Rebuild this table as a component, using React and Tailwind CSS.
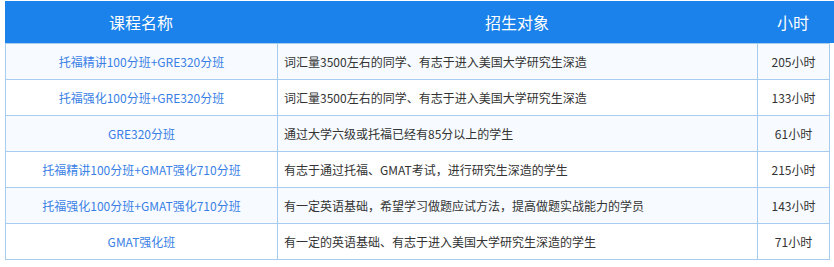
const ROWS = [
  { name: "托福精讲100分班+GRE320分班", target: "词汇量3500左右的同学、有志于进入美国大学研究生深造", hours: "205小时" },
  { name: "托福强化100分班+GRE320分班", target: "词汇量3500左右的同学、有志于进入美国大学研究生深造", hours: "133小时" },
  { name: "GRE320分班", target: "通过大学六级或托福已经有85分以上的学生", hours: "61小时" },
  { name: "托福精讲100分班+GMAT强化710分班", target: "有志于通过托福、GMAT考试，进行研究生深造的学生", hours: "215小时" },
  { name: "托福强化100分班+GMAT强化710分班", target: "有一定英语基础，希望学习做题应试方法，提高做题实战能力的学员", hours: "143小时" },
  { name: "GMAT强化班", target: "有一定的英语基础、有志于进入美国大学研究生深造的学生", hours: "71小时" },
];

export default function App() {
  return (
    <div className="w-[834px] h-[267px] bg-white overflow-hidden pt-[1px] pl-[5px] font-['Microsoft_YaHei','Noto_Sans_CJK_SC',sans-serif]">
      {/* Header */}
      <div className="grid grid-cols-[272px_480px_72px_1fr] h-[42px] bg-[#1a82ea] text-white text-base">
        <div className="flex items-center justify-center">课程名称</div>
        <div className="flex items-center justify-center">招生对象</div>
        <div className="flex items-center justify-center">小时</div>
        <div />
      </div>

      {/* Body */}
      <div className="w-[825px] border-l border-t border-[#a8cbf0] text-xs">
        {ROWS.map((r, i) => (
          <div
            key={i}
            className={`grid grid-cols-[272px_480px_72px] h-[36px] border-b border-[#a8cbf0] ${i % 2 === 0 ? "bg-[#f7fbff]" : "bg-white"}`}
          >
            <div className="flex items-center justify-center border-r border-[#a8cbf0] text-[#3a7fe6]">{r.name}</div>
            <div className="flex items-center pl-[6px] border-r border-[#a8cbf0] text-[#333333]">{r.target}</div>
            <div className="flex items-center justify-center border-r border-[#a8cbf0] text-[#333333]">{r.hours}</div>
          </div>
        ))}
      </div>
    </div>
  );
}
